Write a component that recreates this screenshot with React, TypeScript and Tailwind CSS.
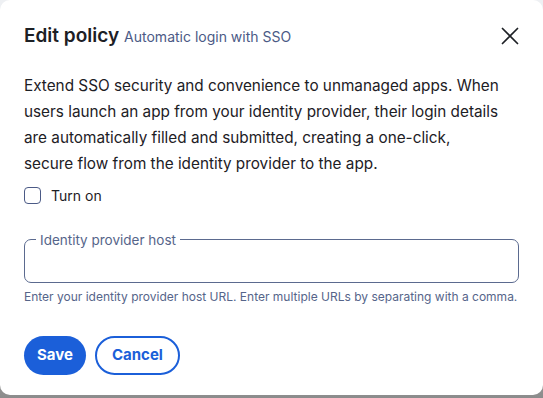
import { useState } from "react";

const lines = [
  "Extend SSO security and convenience to unmanaged apps. When",
  "users launch an app from your identity provider, their login details",
  "are automatically filled and submitted, creating a one-click,",
  "secure flow from the identity provider to the app.",
];

export default function App() {
  const [on, setOn] = useState(false);

  return (
    <div className="h-[398px] w-[543px] bg-gradient-to-b from-[#eef0f3] via-[#eef0f3] to-[#8c8c8c] font-['Inter',sans-serif]">
      <div className="h-[395px] w-[543px] rounded-[10px] bg-white px-6 pt-[22px]">
        <div className="flex items-center justify-between">
          <h2 className="flex items-baseline gap-[5px]">
            <span className="text-[19px] font-semibold text-[#1d2025]">Edit policy</span>
            <span className="text-[14px] text-[#4b5a86]">Automatic login with SSO</span>
          </h2>
          <button className="-mr-[3px] flex h-6 w-6 items-center justify-center text-[#1d2025]">
            <svg width="18" height="18" viewBox="0 0 18 18" fill="none" stroke="currentColor" strokeWidth="1.7" strokeLinecap="round">
              <path d="M1.5 1.5l15 15M16.5 1.5l-15 15" />
            </svg>
          </button>
        </div>

        <p className="mt-[22px] text-[15.3px] leading-[26px] text-[#1d2025]">
          {lines.map((l) => (
            <span key={l} className="block whitespace-nowrap">
              {l}
            </span>
          ))}
        </p>

        <label className="mt-[8px] flex items-center gap-[10px]">
          <input
            type="checkbox"
            checked={on}
            onChange={() => setOn(!on)}
            className="h-[17px] w-[17px] appearance-none rounded-[4px] border border-[#4b5a86] bg-white"
          />
          <span className="text-[14px] text-[#1d2025]">Turn on</span>
        </label>

        <fieldset className="mt-[26px] h-[51px] rounded-[7px] border border-[#5b6a8f] px-[11px]">
          <legend className="px-[4px] text-[13.5px] leading-[16px] text-[#56658a]">Identity provider host</legend>
          <input className="h-[30px] w-full bg-transparent text-[14px] outline-none" />
        </fieldset>

        <p className="mt-[5px] text-[12px] text-[#56658a]">
          Enter your identity provider host URL. Enter multiple URLs by separating with a comma.
        </p>

        <div className="mt-[30px] flex gap-[9px]">
          <button className="h-[39px] rounded-full bg-[#1b5fd9] px-[13px] text-[15px] font-bold text-white">Save</button>
          <button className="h-[39px] rounded-full border-2 border-[#1b5fd9] bg-white px-[15px] text-[15px] font-bold text-[#1b5fd9]">Cancel</button>
        </div>
      </div>
    </div>
  );
}
